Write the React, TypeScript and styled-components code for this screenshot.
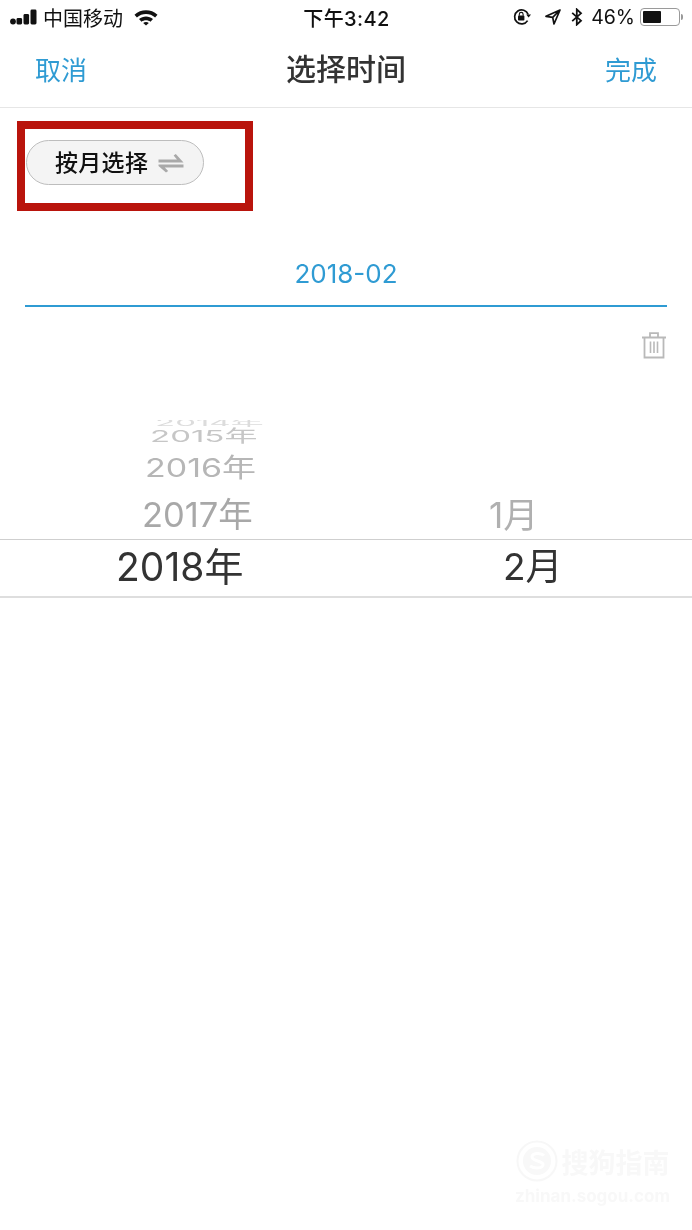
import React from 'react';
import styled, { createGlobalStyle } from 'styled-components';

const GlobalStyle = createGlobalStyle`
  html, body {
    margin: 0;
    padding: 0;
    background: #fff;
  }
  body {
    font-family: Inter, "Noto Sans CJK SC", sans-serif;
  }
`;

const years = [
  { label: '2014年', shift: 155, size: 33, squash: 0.26, color: '#dcdcdc', height: 7 },
  { label: '2015年', shift: 150, size: 33, squash: 0.5, color: '#c6c6c6', height: 18 },
  { label: '2016年', shift: 145, size: 34, squash: 0.76, color: '#b6b6b6', height: 46 },
  { label: '2017年', shift: 142, size: 34.500, squash: 1, color: '#a8a8a8', height: 48 },
];

function App() {
  return (
    <Page>
      <GlobalStyle />
      <StatusBar>
        <StatusSide>
          <svg width="27" height="16" viewBox="0 0 27 16">
            <circle cx="3" cy="12.500" r="2.900" fill="#111" />
            <rect x="6.500" y="9" width="5.600" height="6.500" rx="1.400" fill="#111" />
            <rect x="13.500" y="5" width="5.600" height="10.500" rx="1.400" fill="#111" />
            <rect x="20.500" y="0.500" width="6" height="15" rx="1.400" fill="#111" />
          </svg>
          <Carrier>中国移动</Carrier>
          <WifiIcon width="24" height="17" viewBox="0 0 24 16">
            <path d="M.5 5.200C7-.6 17-.6 23.500 5.200l-2.400 2.700C15.800 3.300 8.200 3.300 2.900 7.900z" fill="#111" />
            <path d="M5 9.600c3.900-3.400 10.100-3.400 14 0l-2.500 2.600c-2.600-2-6.400-2-9 0z" fill="#111" />
            <path d="M9.200 13.500c1.600-1.200 4-1.200 5.600 0L12 16z" fill="#111" />
          </WifiIcon>
        </StatusSide>
        <Clock>下午3:42</Clock>
        <StatusRight>
          <svg width="20" height="18" viewBox="0 0 20 18">
            <path d="M15.600 12.600A7 7 0 1 1 16.200 6.500" fill="none" stroke="#111" strokeWidth="1.700" />
            <path d="M14.200 6.600h4.800L16.600 9.500z" fill="#111" />
            <rect x="6" y="7.600" width="6.400" height="5" rx="0.800" fill="#111" />
            <path d="M7.300 7.800V6.300a1.900 1.900 0 0 1 3.800 0v1.500" fill="none" stroke="#111" strokeWidth="1.100" />
          </svg>
          <LocationIcon width="16" height="16" viewBox="0 0 16 16">
            <path d="M15 1 1 7.300l6.700 1 1.300 6.700zM7.700 8.300 15 1" fill="none" stroke="#111" strokeWidth="1.700" strokeLinejoin="round" />
          </LocationIcon>
          <BluetoothIcon width="12" height="18" viewBox="0 0 12 18">
            <path d="M1.200 4.800 10 12.700 5.800 16.600V1.400L10 5.300 1.200 13.200" fill="none" stroke="#111" strokeWidth="1.800" />
          </BluetoothIcon>
          <Percent>46%</Percent>
          <Battery>
            <BatteryFill />
          </Battery>
          <BatteryCap />
        </StatusRight>
      </StatusBar>

      <NavBar>
        <NavAction>取消</NavAction>
        <NavTitle>选择时间</NavTitle>
        <NavAction>完成</NavAction>
      </NavBar>

      <Callout>
        <ModePill>
          <PillLabel>按月选择</PillLabel>
          <svg width="26" height="20" viewBox="0 0 26 20">
            <path d="M.5 6.500h18.500l-3.400-4 2.200-1.500L25.500 9.500H.5z" fill="#a9a9a9" />
            <path d="M25.500 11.500H.5v1.600l7.500 6.400 2.200-1.500-3.400-3.500h18.700z" fill="#a9a9a9" />
          </svg>
        </ModePill>
      </Callout>

      <DateField>2018-02</DateField>

      <TrashRow>
        <svg width="26" height="28" viewBox="0 0 26 28">
          <path d="M1 6.500h24M9 6.200V2.200h8v4" fill="none" stroke="#b9b9b9" strokeWidth="1.800" />
          <path d="M3.500 6.500v20h19v-20" fill="none" stroke="#b9b9b9" strokeWidth="1.800" />
          <path d="M9.500 10.500v11.500M13 10.500v11.500M16.500 10.500v11.500" fill="none" stroke="#b9b9b9" strokeWidth="1.600" />
        </svg>
      </TrashRow>

      <Wheel>
        <WheelColumn>
          {years.map((y) => (
            <WheelItem key={y.label} $shift={y.shift} $size={y.size} $squash={y.squash} $color={y.color} $height={y.height}>
              {y.label}
            </WheelItem>
          ))}
        </WheelColumn>
        <WheelColumn>
          <WheelItem $shift={143} $size={35} $squash={1} $color="#b0b0b0" $height={48}>
            1月
          </WheelItem>
        </WheelColumn>
      </Wheel>

      <SelectedRow>
        <SelectedYear>2018年</SelectedYear>
        <SelectedMonth>2月</SelectedMonth>
      </SelectedRow>

      <Watermark>
        <WatermarkBrand>
          <svg width="42" height="42" viewBox="0 0 42 42">
            <circle cx="21" cy="21" r="19.500" fill="none" stroke="#f7f7f7" strokeWidth="2" />
            <circle cx="21" cy="21" r="14" fill="#f8f8f8" />
            <path d="M28 15.500c-3-3-12-3-12 1.500s12 3.500 11 8c-1 4-9 3.500-13 1" fill="none" stroke="#fff" strokeWidth="3" />
          </svg>
          搜狗指南
        </WatermarkBrand>
        <WatermarkUrl>zhinan.sogou.com</WatermarkUrl>
      </Watermark>
    </Page>
  );
}

export default App;

const Page = styled.div`
  position: relative;
  width: 692px;
  height: 1230px;
  overflow: hidden;
  background: #fff;
  filter: blur(0.35px);
`;

const StatusBar = styled.div`
  display: grid;
  grid-template-columns: 1fr auto 1fr;
  align-items: center;
  height: 34px;
  padding: 0 9px 0 10px;
  color: #111;
`;

const StatusSide = styled.div`
  display: flex;
  align-items: center;
`;

const StatusRight = styled(StatusSide)`
  justify-content: flex-end;
`;

const Carrier = styled.span`
  font-size: 20px;
  margin-left: 6px;
`;

const WifiIcon = styled.svg`
  margin-left: 11px;
`;

const Clock = styled.span`
  font-size: 20px;
  font-weight: 500;
  letter-spacing: 0.4px;
`;

const LocationIcon = styled.svg`
  margin-left: 13px;
`;

const BluetoothIcon = styled.svg`
  margin-left: 10px;
`;

const Percent = styled.span`
  font-size: 19.500px;
  margin-left: 8px;
`;

const Battery = styled.span`
  box-sizing: border-box;
  display: block;
  width: 40px;
  height: 18px;
  margin-left: 5px;
  padding: 2px;
  border: 1px solid #9a9a9a;
  border-radius: 4px;
`;

const BatteryFill = styled.span`
  display: block;
  width: 18px;
  height: 100%;
  background: #111;
  border-radius: 1px;
`;

const BatteryCap = styled.span`
  display: block;
  width: 2px;
  height: 6px;
  margin-left: 1px;
  background: #999;
  border-radius: 0 2px 2px 0;
`;

const NavBar = styled.div`
  box-sizing: border-box;
  display: flex;
  align-items: center;
  justify-content: space-between;
  height: 74px;
  padding: 0 35px 4px;
  border-bottom: 1px solid #e6e6e6;
`;

const NavAction = styled.span`
  font-size: 26px;
  color: #2f9bd3;
`;

const NavTitle = styled.span`
  padding-bottom: 3px;
  font-size: 30px;
  font-weight: 500;
  color: #333;
`;

const Callout = styled.div`
  box-sizing: border-box;
  display: flex;
  align-items: flex-start;
  width: 236px;
  height: 90px;
  margin: 13px 0 0 17px;
  padding: 11px 0 0 1px;
  border: 8px solid #b9140c;
`;

const ModePill = styled.div`
  box-sizing: border-box;
  display: flex;
  align-items: center;
  gap: 10px;
  width: 178px;
  height: 45px;
  padding-left: 28px;
  border: 1px solid #bdbdbd;
  border-radius: 23px;
  background: #f4f4f4;
`;

const PillLabel = styled.span`
  padding-bottom: 3px;
  font-size: 23px;
  font-weight: 500;
  letter-spacing: 0.3px;
  color: #111;
`;

const DateField = styled.div`
  box-sizing: border-box;
  height: 63px;
  margin: 33px 25px 0;
  padding-top: 11px;
  border-bottom: 2px solid #2f9bd3;
  font-size: 26px;
  line-height: 37px;
  text-align: center;
  color: #2f9bd3;
`;

const TrashRow = styled.div`
  display: flex;
  justify-content: flex-end;
  height: 28px;
  margin-top: 24px;
  padding-right: 25px;
`;

const Wheel = styled.div`
  display: grid;
  grid-template-columns: 346px 346px;
  height: 119px;
  margin-top: 61px;
  overflow: hidden;
`;

const WheelColumn = styled.div`
  display: flex;
  flex-direction: column;
  justify-content: flex-end;
`;

const WheelItem = styled.div<{ $shift: number; $size: number; $squash: number; $color: string; $height: number }>`
  flex: none;
  height: ${(p) => p.$height}px;
  padding-left: ${(p) => p.$shift}px;
  font-size: ${(p) => p.$size}px;
  line-height: ${(p) => p.$height}px;
  color: ${(p) => p.$color};
  white-space: nowrap;
  transform: scaleY(${(p) => p.$squash});
`;

const SelectedRow = styled.div`
  box-sizing: border-box;
  display: grid;
  grid-template-columns: 346px 346px;
  align-items: center;
  height: 59px;
  padding-bottom: 2px;
  border-top: 1px solid #cfcfcf;
  border-bottom: 2px solid #dedede;
  line-height: 46px;
  color: #333;
`;

const SelectedYear = styled.span`
  padding-left: 116px;
  font-size: 39px;
`;

const SelectedMonth = styled.span`
  padding-left: 157px;
  font-size: 37px;
`;

const Watermark = styled.div`
  position: absolute;
  right: 22px;
  bottom: 24px;
  display: flex;
  flex-direction: column;
  align-items: center;
  color: #f8f8f8;
`;

const WatermarkBrand = styled.div`
  display: flex;
  align-items: center;
  gap: 4px;
  font-size: 27px;
  font-weight: 700;
`;

const WatermarkUrl = styled.div`
  margin-top: 4px;
  font-size: 17px;
  font-weight: 700;
`;
